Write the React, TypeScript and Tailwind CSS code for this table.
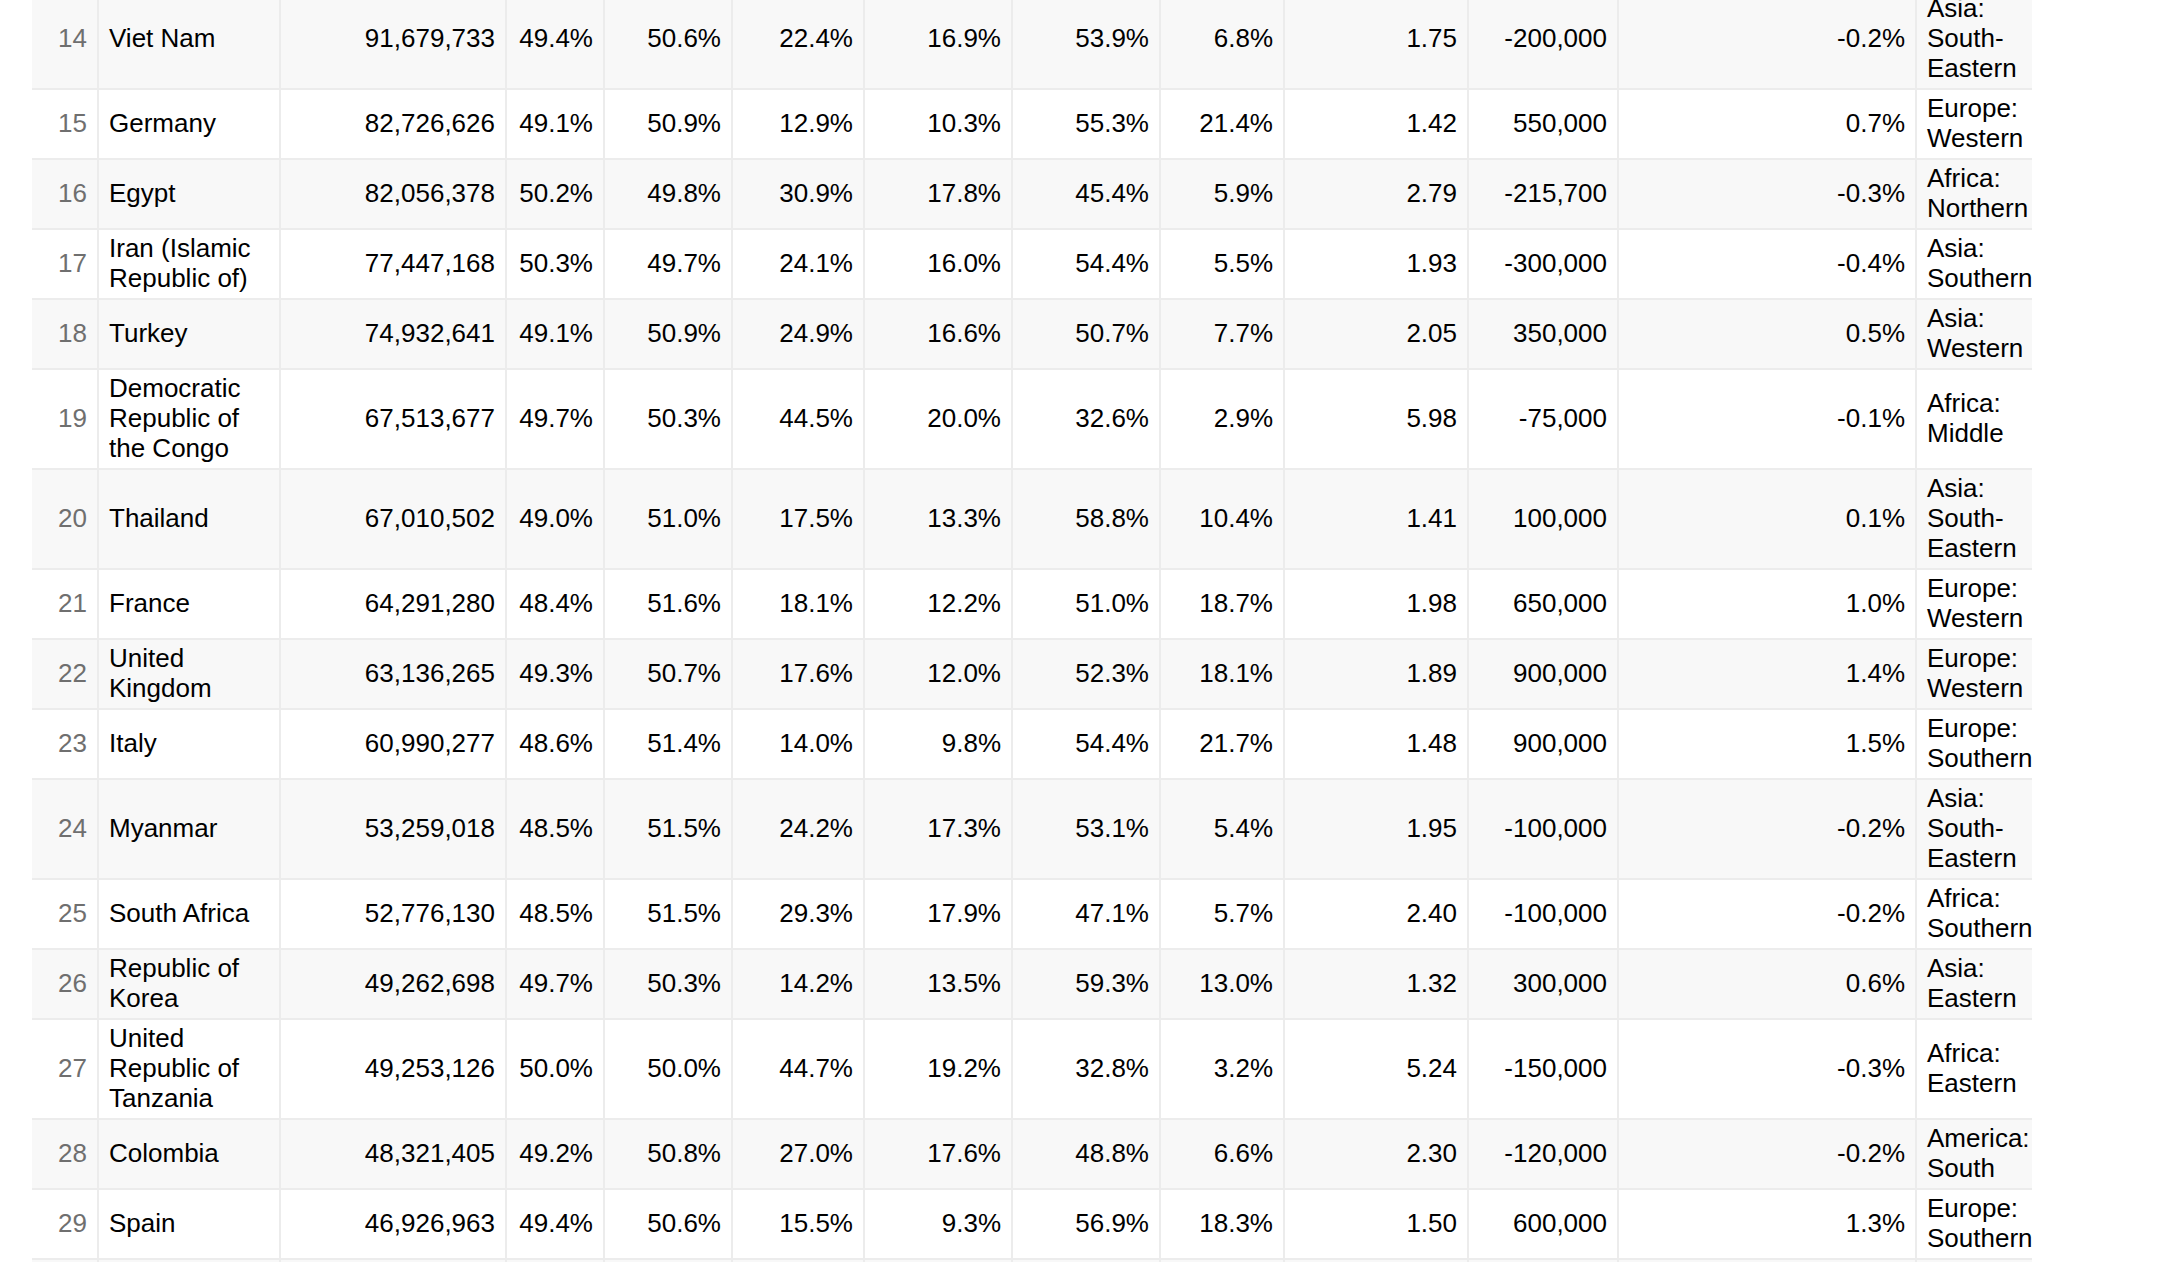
const rows: string[][] = [
  ["14", "Viet Nam", "91,679,733", "49.4%", "50.6%", "22.4%", "16.9%", "53.9%", "6.8%", "1.75", "-200,000", "-0.2%", "Asia: South-Eastern"],
  ["15", "Germany", "82,726,626", "49.1%", "50.9%", "12.9%", "10.3%", "55.3%", "21.4%", "1.42", "550,000", "0.7%", "Europe: Western"],
  ["16", "Egypt", "82,056,378", "50.2%", "49.8%", "30.9%", "17.8%", "45.4%", "5.9%", "2.79", "-215,700", "-0.3%", "Africa: Northern"],
  ["17", "Iran (Islamic Republic of)", "77,447,168", "50.3%", "49.7%", "24.1%", "16.0%", "54.4%", "5.5%", "1.93", "-300,000", "-0.4%", "Asia: Southern"],
  ["18", "Turkey", "74,932,641", "49.1%", "50.9%", "24.9%", "16.6%", "50.7%", "7.7%", "2.05", "350,000", "0.5%", "Asia: Western"],
  ["19", "Democratic Republic of the Congo", "67,513,677", "49.7%", "50.3%", "44.5%", "20.0%", "32.6%", "2.9%", "5.98", "-75,000", "-0.1%", "Africa: Middle"],
  ["20", "Thailand", "67,010,502", "49.0%", "51.0%", "17.5%", "13.3%", "58.8%", "10.4%", "1.41", "100,000", "0.1%", "Asia: South-Eastern"],
  ["21", "France", "64,291,280", "48.4%", "51.6%", "18.1%", "12.2%", "51.0%", "18.7%", "1.98", "650,000", "1.0%", "Europe: Western"],
  ["22", "United Kingdom", "63,136,265", "49.3%", "50.7%", "17.6%", "12.0%", "52.3%", "18.1%", "1.89", "900,000", "1.4%", "Europe: Western"],
  ["23", "Italy", "60,990,277", "48.6%", "51.4%", "14.0%", "9.8%", "54.4%", "21.7%", "1.48", "900,000", "1.5%", "Europe: Southern"],
  ["24", "Myanmar", "53,259,018", "48.5%", "51.5%", "24.2%", "17.3%", "53.1%", "5.4%", "1.95", "-100,000", "-0.2%", "Asia: South-Eastern"],
  ["25", "South Africa", "52,776,130", "48.5%", "51.5%", "29.3%", "17.9%", "47.1%", "5.7%", "2.40", "-100,000", "-0.2%", "Africa: Southern"],
  ["26", "Republic of Korea", "49,262,698", "49.7%", "50.3%", "14.2%", "13.5%", "59.3%", "13.0%", "1.32", "300,000", "0.6%", "Asia: Eastern"],
  ["27", "United Republic of Tanzania", "49,253,126", "50.0%", "50.0%", "44.7%", "19.2%", "32.8%", "3.2%", "5.24", "-150,000", "-0.3%", "Africa: Eastern"],
  ["28", "Colombia", "48,321,405", "49.2%", "50.8%", "27.0%", "17.6%", "48.8%", "6.6%", "2.30", "-120,000", "-0.2%", "America: South"],
  ["29", "Spain", "46,926,963", "49.4%", "50.6%", "15.5%", "9.3%", "56.9%", "18.3%", "1.50", "600,000", "1.3%", "Europe: Southern"],
];

const cols =
  "grid grid-cols-[67px_182px_226px_98px_128px_132px_148px_148px_124px_184px_150px_298px_115px]";
const line = "border-r-2 border-[#ececec]";

export default function App() {
  return (
    <div className="h-screen bg-white overflow-hidden font-['Liberation_Sans',Arial,sans-serif] text-[26px] leading-[30px] text-black">
      <div className="ml-[32px] -mt-[10px] w-[2000px]">
        {rows.map((row, i) => (
          <div
            key={row[0]}
            className={
              cols +
              " min-h-[70px] border-b-2 border-[#ececec] " +
              (i % 2 === 0 ? "bg-[#f8f8f8]" : "bg-white")
            }
          >
            {/* index */}
            <div className={"flex items-center justify-end px-[10px] pt-[3px] pb-[5px] text-[#6f6f6f] " + line}>
              {row[0]}
            </div>
            {/* country name */}
            <div className={"flex items-center px-[10px] pt-[3px] pb-[5px] " + line}>
              <span>{row[1]}</span>
            </div>
            {row.slice(2, 12).map((v, j) => (
              <div
                key={j}
                className={"flex items-center justify-end px-[10px] pt-[3px] pb-[5px] whitespace-nowrap " + line}
              >
                {v}
              </div>
            ))}
            {/* region */}
            <div className="flex items-center pl-[10px] pr-0 pt-[3px] pb-[5px]">
              <span>{row[12]}</span>
            </div>
          </div>
        ))}
        {/* next row, just entering the view */}
        <div className={cols + " h-[70px] bg-[#f8f8f8]"}>
          {Array.from({ length: 12 }).map((_, j) => (
            <div key={j} className={line} />
          ))}
          <div />
        </div>
      </div>
    </div>
  );
}
